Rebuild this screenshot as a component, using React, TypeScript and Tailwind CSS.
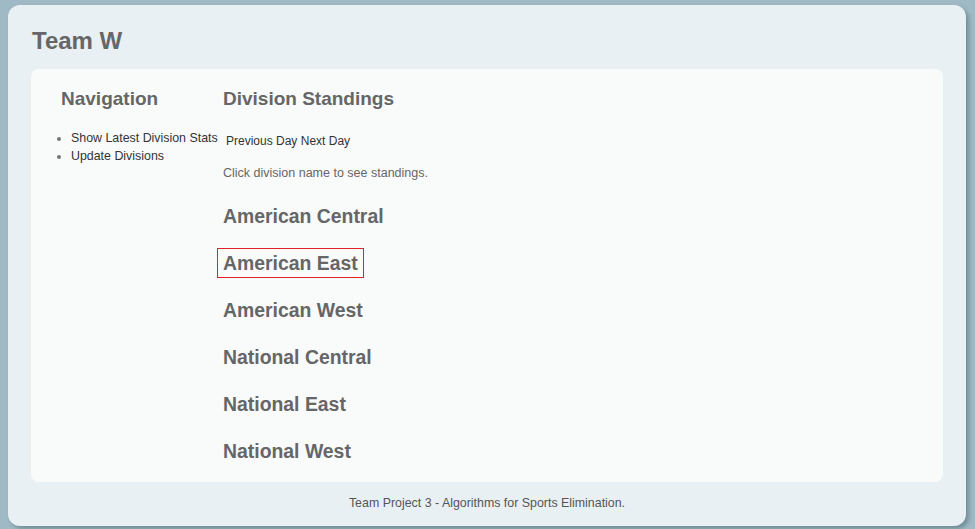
export default function App() {
  const divisions = [
    "American Central",
    "American East",
    "American West",
    "National Central",
    "National East",
    "National West",
  ];

  return (
    <div
      className="w-[975px] h-[529px] overflow-hidden bg-[#9fbac4] pl-[8px] pt-[5px]"
      style={{ fontFamily: '"Liberation Sans", Arial, sans-serif' }}
    >
      <div className="w-[958px] h-[521px] rounded-[12px] bg-[#e9f0f3] shadow-[3px_3px_4px_rgba(60,90,100,0.45)] px-[23px] pt-[22px] flex flex-col">
        <h1 className="text-[24px] leading-[28px] font-bold text-[#666666] ml-[1px]">Team W</h1>

        <div className="mt-[14px] h-[413px] rounded-[8px] bg-[#f9fbfb] pt-[18px] flex">
          {/* sidebar */}
          <div className="w-[192px] shrink-0 pl-[30px]">
            <h2 className="text-[19px] leading-[24px] font-bold text-[#666666]">Navigation</h2>
            <ul className="mt-[18px] -ml-[13px] pl-[23px] list-disc text-[12.4px] leading-[18px] text-[#333333] marker:text-[#777]">
              <li className="whitespace-nowrap">Show Latest Division Stats</li>
              <li>Update Divisions</li>
            </ul>
          </div>

          {/* main */}
          <div className="flex-1">
            <h2 className="text-[19px] leading-[24px] font-bold text-[#666666]">Division Standings</h2>
            <p className="mt-[21px] ml-[3px] text-[12px] leading-[18px] text-[#333333]">
              <a className="cursor-pointer">Previous Day</a> <a className="cursor-pointer">Next Day</a>
            </p>
            <p className="mt-[14px] text-[12.5px] leading-[18px] text-[#666666]">
              Click division name to see standings.
            </p>
            <div className="mt-[22px] flex flex-col gap-[23px]">
              {divisions.map((d) => (
                <div key={d} className="h-[24px]">
                  <span
                    className={
                      d === "American East"
                        ? "inline-block -ml-[6px] -mt-[3px] px-[5px] pt-[3px] pb-[3px] border border-[#e0202a] text-[19.4px] leading-[22px] font-bold text-[#666666]"
                        : "inline-block text-[19.4px] leading-[24px] font-bold text-[#666666]"
                    }
                  >
                    {d}
                  </span>
                </div>
              ))}
            </div>
          </div>
        </div>

        <p className="mt-[14px] text-center text-[12.4px] leading-[14px] text-[#555555]">
          Team Project 3 - Algorithms for Sports Elimination.
        </p>
      </div>
    </div>
  );
}
